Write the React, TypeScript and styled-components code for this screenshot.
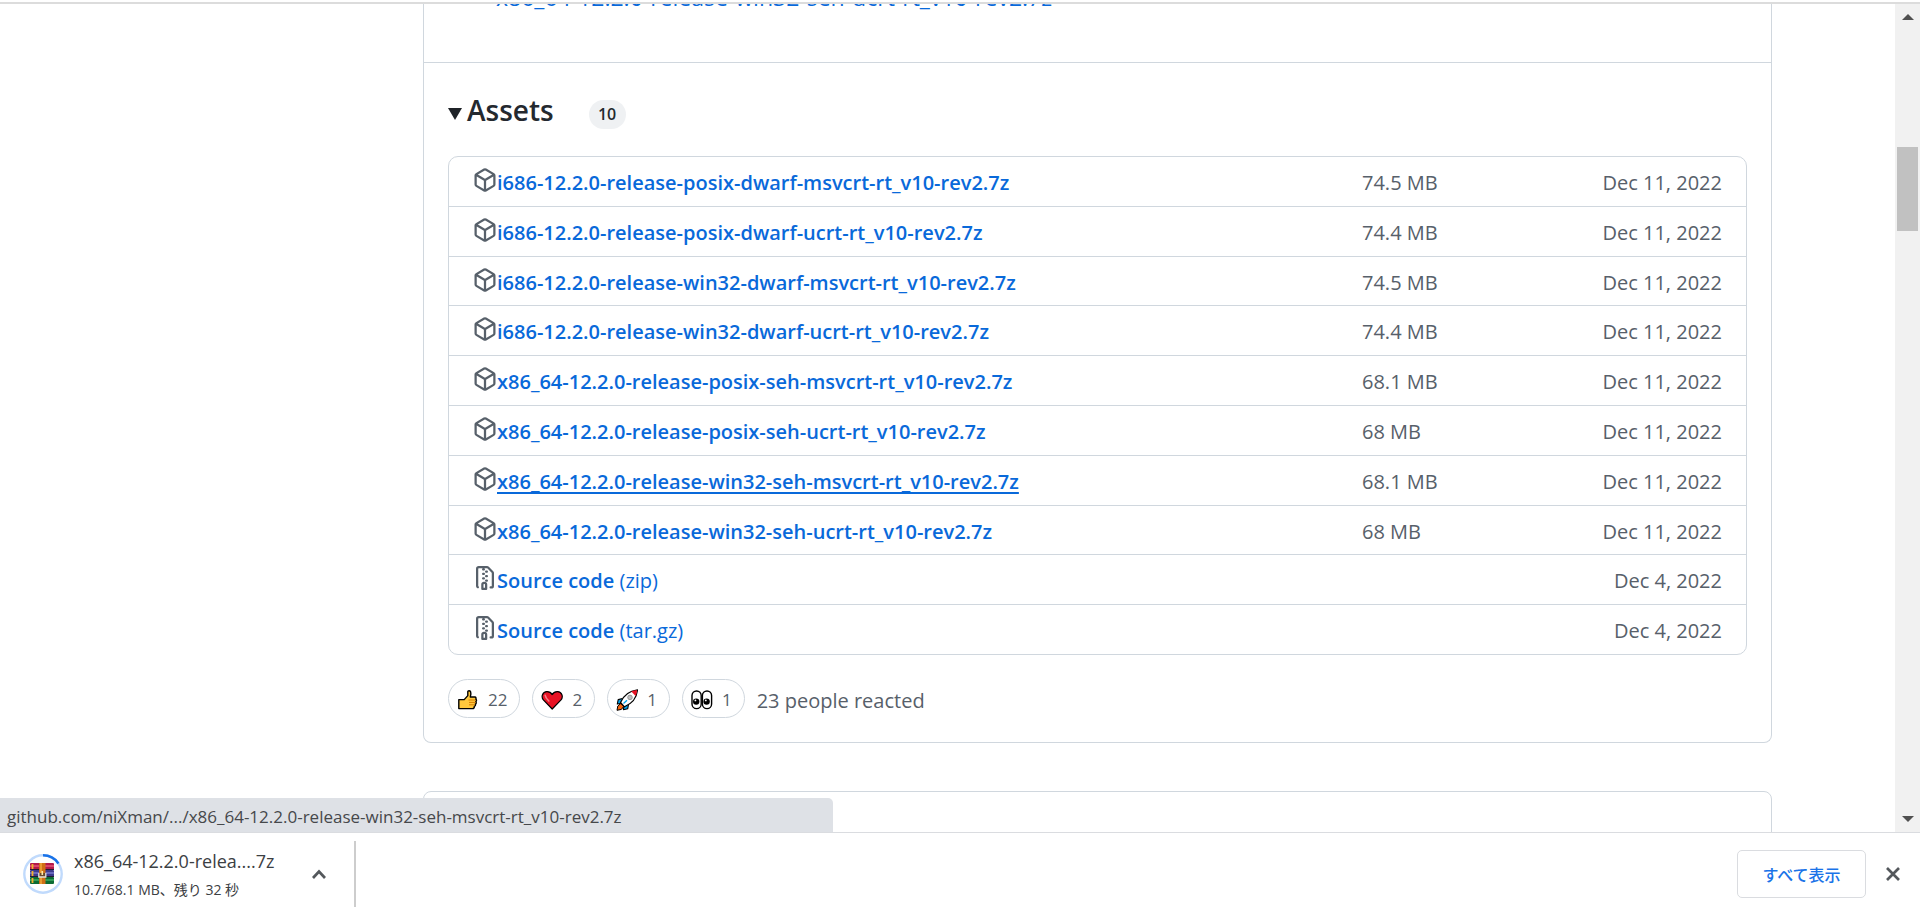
import React from "react";
import styled, { createGlobalStyle } from "styled-components";

const border = "#d0d7de";
const muted = "#57606a";
const link = "#0969da";
const sans = `"Open Sans", "Noto Sans CJK JP", sans-serif`;

const GlobalStyle = createGlobalStyle`
  * { box-sizing: border-box; }
  body { margin: 0; background: #fff; color: #24292f; font-family: ${sans}; font-size: 20px; line-height: 30px; }
  button { font: inherit; cursor: pointer; }
`;

const Browser = styled.div`
  display: flex;
  flex-direction: column;
  height: 100vh;
  overflow: hidden;
  padding-top: 2px;
`;

const Viewport = styled.div`
  position: relative;
  display: flex;
  flex: 1;
  min-height: 0;
  overflow: hidden;
  border-top: 2px solid #dcdcdc;
`;

const Page = styled.main`
  flex: 1;
  min-width: 0;
  padding: 0 123px 0 423px;
  display: grid;
  grid-template-columns: minmax(0, 1fr);
  align-content: start;
  row-gap: 48px;
`;

const Release = styled.article`
  border: 1px solid ${border};
  border-top: 0;
  border-radius: 0 0 8px 8px;
`;

const NextRelease = styled.article`
  height: 120px;
  border: 1px solid ${border};
  border-radius: 8px;
`;

const Notes = styled.div`
  display: flex;
  align-items: flex-end;
  height: 58px;
  padding: 0 72px 49px;
`;

const NotesLink = styled.a`
  color: ${link};
  font-size: 23px;
  line-height: 32px;
  text-decoration: none;
  white-space: nowrap;
`;

const Footer = styled.div`
  border-top: 1px solid ${border};
  padding: 28px 24px 24px;
`;

const Summary = styled.summary`
  display: flex;
  align-items: center;
  height: 38px;
  list-style: none;
  cursor: pointer;
`;

const Marker = styled.svg`
  width: 14px;
  height: 12px;
  margin: 8px 5px 0 0;
  fill: #1f2328;
`;

const Heading = styled.h3`
  margin: 0 35px 0 0;
  font-size: 28px;
  font-weight: 600;
  line-height: 36px;
`;

const Counter = styled.span`
  min-width: 37px;
  margin-top: 8px;
  padding: 0 8px;
  border-radius: 15px;
  background: #eff1f3;
  font-size: 16px;
  font-weight: 600;
  line-height: 29px;
  text-align: center;
`;

const AssetList = styled.ul`
  display: grid;
  min-height: 499px;
  margin: 27px 0 24px;
  padding: 0;
  border: 1px solid ${border};
  border-radius: 10px;
  list-style: none;
`;

const AssetRow = styled.li`
  display: grid;
  grid-template-columns: minmax(0, 1fr) 180px 180px;
  padding: 11px 24px 7px;
  color: ${muted};
  &:not(:last-child) { border-bottom: 1px solid ${border}; }
`;

const AssetName = styled.div`
  display: flex;
  align-items: center;
  height: 30px;
  white-space: nowrap;
`;

const Octicon = styled.svg`
  flex: none;
  width: 24px;
  height: 24px;
  margin-bottom: 6px;
  fill: ${muted};
`;

const AssetLink = styled.a<{ $active?: boolean }>`
  color: ${link};
  font-weight: 600;
  text-decoration: ${(p) => (p.$active ? "underline" : "none")};
  text-decoration-thickness: 2px;
  text-underline-offset: 3px;
  text-decoration-skip-ink: none;
`;

const Format = styled.span`
  font-weight: 400;
`;

const AssetDate = styled.time`
  text-align: right;
`;

const Reactions = styled.div`
  display: flex;
  align-items: center;
  gap: 12px;
  color: ${muted};
`;

const Reaction = styled.button`
  display: flex;
  align-items: center;
  gap: 9px;
  height: 39px;
  padding: 2px 12px 0 8px;
  border: 1px solid ${border};
  border-radius: 20px;
  background: #fff;
  color: ${muted};
  font-size: 17px;
  line-height: 24px;
`;

const Emoji = styled.svg`
  width: 22px;
  height: 22px;
`;

const ReactionTotal = styled.span`
  padding-top: 5px;
`;

const Scrollbar = styled.div`
  display: flex;
  flex-direction: column;
  align-items: center;
  width: 25px;
  padding: 10px 0;
  background: #f1f1f1;
`;

const Arrow = styled.svg`
  width: 12px;
  height: 6px;
  fill: #505050;
`;

const Track = styled.div`
  flex: 1;
  padding-top: 127px;
`;

const Thumb = styled.div`
  width: 21px;
  height: 84px;
  background: #c1c1c1;
`;

const StatusBubble = styled.div`
  position: absolute;
  left: 0;
  bottom: 0;
  width: 833px;
  max-width: 50%;
  padding: 7px 7px 3px;
  border-radius: 0 5px 0 0;
  background: #dee1e6;
  color: #46484b;
  font-size: 17px;
  line-height: 24px;
  white-space: nowrap;
`;

const Shelf = styled.footer`
  display: flex;
  align-items: center;
  height: 83px;
  flex: none;
  padding: 0 19px 0 23px;
  border-top: 1px solid #dadce0;
  color: #3c4043;
`;

const Download = styled.div`
  display: flex;
  align-items: center;
  height: 66px;
  border-right: 2px solid #cdcdcd;
`;

const ProgressIcon = styled.svg`
  width: 40px;
  height: 40px;
  margin-right: 11px;
`;

const FileInfo = styled.div`
  width: 229px;
  padding-top: 2px;
  white-space: nowrap;
`;

const FileName = styled.div`
  font-size: 18px;
  line-height: 30px;
`;

const FileStatus = styled.div`
  font-size: 14px;
  line-height: 28px;
`;

const IconButton = styled.button`
  display: flex;
  padding: 8px;
  border: 0;
  background: none;
`;

const MenuButton = styled(IconButton)`
  margin-right: 19px;
`;

const Glyph = styled.svg`
  width: 16px;
  height: 16px;
  fill: none;
  stroke: #54585c;
  stroke-width: 2.7;
`;

const ShowAll = styled.button`
  width: 129px;
  height: 48px;
  margin: 0 11px 0 auto;
  padding: 2px 0 0;
  border: 1px solid #dadce0;
  border-radius: 5px;
  background: #fff;
  color: #1a73e8;
  font-size: 16px;
  font-weight: 500;
`;

const CloseButton = styled(IconButton)`
  margin-right: -8px;
`;

const PackageIcon = () => (
  <Octicon viewBox="0 0 16 16" aria-hidden="true">
    <path d="m8.878.392 5.25 3.045c.54.314.872.89.872 1.514v6.098a1.75 1.75 0 0 1-.872 1.514l-5.25 3.045a1.75 1.75 0 0 1-1.756 0l-5.25-3.045A1.75 1.75 0 0 1 1 11.049V4.951c0-.624.332-1.201.872-1.514L7.122.392a1.75 1.75 0 0 1 1.756 0ZM7.875 1.69l-4.63 2.685L8 7.133l4.755-2.758-4.63-2.685a.248.248 0 0 0-.25 0ZM2.5 5.677v5.372c0 .09.047.171.125.216l4.625 2.683V8.432Zm6.25 8.271 4.625-2.683a.25.25 0 0 0 .125-.216V5.677L8.75 8.432Z" />
  </Octicon>
);

const ZipIcon = () => (
  <Octicon viewBox="0 0 16 16" aria-hidden="true">
    <path d="M3.5 1.75v11.5c0 .09.048.173.126.217a.75.75 0 0 1-.752 1.298A1.748 1.748 0 0 1 2 13.25V1.75C2 .784 2.784 0 3.75 0h5.586c.464 0 .909.185 1.237.513l2.914 2.914c.329.328.513.773.513 1.237v8.586A1.75 1.75 0 0 1 12.25 15h-.5a.75.75 0 0 1 0-1.5h.5a.25.25 0 0 0 .25-.25V4.664a.25.25 0 0 0-.073-.177L9.513 1.573a.25.25 0 0 0-.177-.073H7.25a.75.75 0 0 1 0 1.5h-.5a.75.75 0 0 1 0-1.5h-3a.25.25 0 0 0-.25.25Zm3.75 8.75h.5c.966 0 1.75.784 1.75 1.75v3a.75.75 0 0 1-.75.75h-2.5a.75.75 0 0 1-.75-.75v-3c0-.966.784-1.75 1.75-1.75ZM6 5.25a.75.75 0 0 1 .75-.75h.5a.75.75 0 0 1 0 1.5h-.5A.75.75 0 0 1 6 5.25Zm.75 2.25h.5a.75.75 0 0 1 0 1.5h-.5a.75.75 0 0 1 0-1.5ZM8 6.75A.75.75 0 0 1 8.75 6h.5a.75.75 0 0 1 0 1.5h-.5A.75.75 0 0 1 8 6.75ZM8.75 3h.5a.75.75 0 0 1 0 1.5h-.5a.75.75 0 0 1 0-1.5ZM8 9.75A.75.75 0 0 1 8.75 9h.5a.75.75 0 0 1 0 1.5h-.5A.75.75 0 0 1 8 9.75Zm-1 2.5v2.25h1v-2.25a.25.25 0 0 0-.25-.25h-.5a.25.25 0 0 0-.25.25Z" />
  </Octicon>
);

const ThumbsUp = () => (
  <Emoji viewBox="0 0 22 22" aria-hidden="true">
    <path d="M1.8 10.6h5.4l3.6-4V2.8c0-1.4 2.2-1.4 2.8 0 .5 1.6.4 3.4-.3 5.200h4.500c1.400 0 1.500 1.500.9 2.200 1.100.6 1 2 .1 2.500.8.8.5 2-.5 2.400.5.900 0 2-1 2.300.2 1.200-.5 2.200-1.800 2.200H1.800Z" fill="#ffc83d" stroke="#000" strokeWidth="1.4" strokeLinejoin="round" />
    <path d="M11.500 11h7M12 13.400h6.500M12 15.800h5.500" stroke="#d67d00" strokeWidth="1" fill="none" />
  </Emoji>
);

const Heart = () => (
  <Emoji viewBox="0 0 22 22" aria-hidden="true">
    <path d="M11.200 20 2.600 11.200C-.4 7.800 1.600 2.800 5.800 2.600c2.200-.1 4.200 1 5.400 3 1.200-2 3.200-3.100 5.400-3 4.200.2 6.200 5.200 3.200 8.600Z" fill="#e81224" stroke="#000" strokeWidth="1.2" strokeLinejoin="round" />
    <path d="M4.200 6.400c.3 2 1.400 3.500 3.600 5.600" stroke="#f4808a" strokeWidth="1.6" strokeLinecap="round" fill="none" />
  </Emoji>
);

const Rocket = () => (
  <Emoji viewBox="0 0 22 22" aria-hidden="true">
    <path d="M6.500 9.500 2.200 10.600 1.300 15l4.200-.8M12.500 15.500l-.8 4.300-4.300.9.600-4" fill="#00a4ef" stroke="#000" strokeWidth="1.1" strokeLinejoin="round" />
    <path d="M4.800 14.500 1.800 17 1 21.300l4.400-.9 2.400-3Z" fill="#f7630c" stroke="#000" strokeWidth="1" strokeLinejoin="round" />
    <path d="M4.500 13.500C7 7.500 12 2 21.500.8 20.800 10 15 15 8.500 17.800Z" fill="#fff" stroke="#000" strokeWidth="1.2" strokeLinejoin="round" />
    <path d="M15.300 2.500C17 1.700 19 1.200 21.100 1.200 21 3.300 20.400 5.200 19.600 6.900Z" fill="#e81224" />
    <circle cx="14" cy="8.4" r="2.3" fill="#bdbdbd" stroke="#8a8a8a" strokeWidth=".8" />
    <path d="m7.500 14.500 3.500-3.300" stroke="#00a4ef" strokeWidth="1.3" />
  </Emoji>
);

const Eyes = () => (
  <Emoji viewBox="0 0 22 22" aria-hidden="true">
    {[5.6, 16].map((cx) => (
      <g key={cx}>
        <rect x={cx - 4.6} y="2" width="9.2" height="17.6" rx="4.6" fill="#fff" stroke="#000" strokeWidth="1.4" />
        <circle cx={cx - 0.4} cy="12.6" r="3.2" fill="#000" />
        <circle cx={cx - 1.2} cy="11.4" r=".9" fill="#fff" />
      </g>
    ))}
  </Emoji>
);

const ArchiveProgress = () => (
  <ProgressIcon viewBox="0 0 40 40" role="img" aria-label="Downloading archive">
    <circle cx="20" cy="20" r="18.7" fill="none" stroke="#c0dafc" strokeWidth="2.4" />
    <path d="M20 1.300A18.700 18.700 0 0 1 35.400 9.400" fill="none" stroke="#1a73e8" strokeWidth="2.6" />
    <rect x="7" y="9" width="24" height="7" rx="1" fill="#b3194a" />
    <rect x="7" y="11" width="24" height="2" fill="#d8456b" />
    <rect x="7" y="16" width="24" height="7" rx="1" fill="#3d3b8e" />
    <rect x="7" y="18" width="24" height="2" fill="#6a68bd" />
    <rect x="7" y="23" width="24" height="7" rx="1" fill="#0c6b34" />
    <rect x="7" y="25" width="24" height="2" fill="#2f9a55" />
    <path d="M7 15.500h24M7 22.500h24" stroke="#241a33" strokeWidth="1" />
    <path d="M9.500 10v5M9.500 17v5M9.500 24v5" stroke="#f2b02e" strokeWidth="1.8" />
    <rect x="16" y="9" width="6.5" height="21" fill="#cf6f16" />
    <path d="M18 9v21" stroke="#f0a83c" strokeWidth="1.5" />
    <path d="M15.800 19v4h7v-4" fill="#6b4a2a" stroke="#e6e2da" strokeWidth="1.3" />
    <path d="M19.300 17v4" stroke="#ffe9a8" strokeWidth="1.6" />
  </ProgressIcon>
);

type Asset = { name: string; format?: string; size?: string; date: string; active?: boolean };

const assets: Asset[] = [
  { name: "i686-12.2.0-release-posix-dwarf-msvcrt-rt_v10-rev2.7z", size: "74.5 MB", date: "Dec 11, 2022" },
  { name: "i686-12.2.0-release-posix-dwarf-ucrt-rt_v10-rev2.7z", size: "74.4 MB", date: "Dec 11, 2022" },
  { name: "i686-12.2.0-release-win32-dwarf-msvcrt-rt_v10-rev2.7z", size: "74.5 MB", date: "Dec 11, 2022" },
  { name: "i686-12.2.0-release-win32-dwarf-ucrt-rt_v10-rev2.7z", size: "74.4 MB", date: "Dec 11, 2022" },
  { name: "x86_64-12.2.0-release-posix-seh-msvcrt-rt_v10-rev2.7z", size: "68.1 MB", date: "Dec 11, 2022" },
  { name: "x86_64-12.2.0-release-posix-seh-ucrt-rt_v10-rev2.7z", size: "68 MB", date: "Dec 11, 2022" },
  { name: "x86_64-12.2.0-release-win32-seh-msvcrt-rt_v10-rev2.7z", size: "68.1 MB", date: "Dec 11, 2022", active: true },
  { name: "x86_64-12.2.0-release-win32-seh-ucrt-rt_v10-rev2.7z", size: "68 MB", date: "Dec 11, 2022" },
  { name: "Source code", format: "(zip)", date: "Dec 4, 2022" },
  { name: "Source code", format: "(tar.gz)", date: "Dec 4, 2022" },
];

const reactions = [
  { label: "Thumbs up", icon: <ThumbsUp />, count: 22 },
  { label: "Heart", icon: <Heart />, count: 2 },
  { label: "Rocket", icon: <Rocket />, count: 1 },
  { label: "Eyes", icon: <Eyes />, count: 1 },
];

export default function App() {
  return (
    <Browser>
      <GlobalStyle />
      <Viewport>
        <Page>
          <Release>
            <Notes>
              <NotesLink href="#">x86_64-12.2.0-release-win32-seh-ucrt-rt_v10-rev2.7z</NotesLink>
            </Notes>
            <Footer>
              <details open>
                <Summary>
                  <Marker viewBox="0 0 14 12" aria-hidden="true">
                    <path d="M0 0h14L7 12Z" />
                  </Marker>
                  <Heading>Assets</Heading>
                  <Counter>10</Counter>
                </Summary>
                <AssetList>
                  {assets.map((a) => (
                    <AssetRow key={a.name + (a.format ?? "")}>
                      <AssetName>
                        {a.format ? <ZipIcon /> : <PackageIcon />}
                        <AssetLink href="#" $active={a.active}>
                          {a.name}
                          {a.format && <Format> {a.format}</Format>}
                        </AssetLink>
                      </AssetName>
                      <span>{a.size}</span>
                      <AssetDate>{a.date}</AssetDate>
                    </AssetRow>
                  ))}
                </AssetList>
              </details>
              <Reactions>
                {reactions.map((r) => (
                  <Reaction key={r.label} type="button" aria-label={r.label}>
                    {r.icon}
                    <span>{r.count}</span>
                  </Reaction>
                ))}
                <ReactionTotal>23 people reacted</ReactionTotal>
              </Reactions>
            </Footer>
          </Release>
          <NextRelease />
        </Page>
        <Scrollbar aria-hidden="true">
          <Arrow viewBox="0 0 12 6"><path d="M6 0 12 6H0Z" /></Arrow>
          <Track><Thumb /></Track>
          <Arrow viewBox="0 0 12 6"><path d="M0 0h12L6 6Z" /></Arrow>
        </Scrollbar>
        <StatusBubble>github.com/niXman/.../x86_64-12.2.0-release-win32-seh-msvcrt-rt_v10-rev2.7z</StatusBubble>
      </Viewport>
      <Shelf>
        <Download>
          <ArchiveProgress />
          <FileInfo>
            <FileName>x86_64-12.2.0-relea....7z</FileName>
            <FileStatus>10.7/68.1 MB、残り 32 秒</FileStatus>
          </FileInfo>
          <MenuButton type="button" aria-label="Download options">
            <Glyph viewBox="0 0 16 16"><path d="m2 12 6-6.500 6 6.500" /></Glyph>
          </MenuButton>
        </Download>
        <ShowAll type="button">すべて表示</ShowAll>
        <CloseButton type="button" aria-label="Close">
          <Glyph viewBox="0 0 16 16"><path d="m2 2 12 12M14 2 2 14" /></Glyph>
        </CloseButton>
      </Shelf>
    </Browser>
  );
}
